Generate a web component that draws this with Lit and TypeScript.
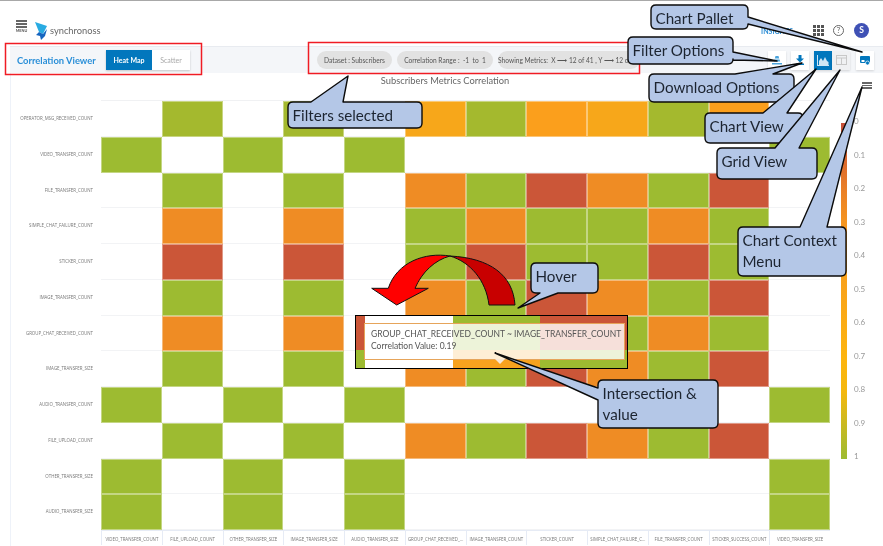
import { LitElement, css, html, svg } from "lit";
import { customElement } from "lit/decorators.js";

const COLORS: Record<string, string> = {
  g: "#a4b92e",
  a: "#f7a71a",
  b: "#fb9f1c",
  G: "#9dbb31",
  O: "#ef8c24",
  R: "#cb5638",
};

const ROWS = [
  ["OPERATOR_MSG_RECEIVED_COUNT", ".g.g.agbagb."],
  ["VIDEO_TRANSFER_COUNT", "G.G.G......G"],
  ["FILE_TRANSFER_COUNT", ".G.G.OGROGR."],
  ["SIMPLE_CHAT_FAILURE_COUNT", ".O.O.GOGGOG."],
  ["STICKER_COUNT", ".R.R.GRGGRG."],
  ["IMAGE_TRANSFER_COUNT", ".G.G.OGROGR."],
  ["GROUP_CHAT_RECEIVED_COUNT", ".O.O.GOGGOG."],
  ["IMAGE_TRANSFER_SIZE", ".G.G.OGROGR."],
  ["AUDIO_TRANSFER_COUNT", "G.G.G......G"],
  ["FILE_UPLOAD_COUNT", ".G.G.OGROGR."],
  ["OTHER_TRANSFER_SIZE", "G.G.G......G"],
  ["AUDIO_TRANSFER_SIZE", "G.G.G......G"],
];

const X_LABELS = [
  "VIDEO_TRANSFER_COUNT",
  "FILE_UPLOAD_COUNT",
  "OTHER_TRANSFER_SIZE",
  "IMAGE_TRANSFER_SIZE",
  "AUDIO_TRANSFER_SIZE",
  "GROUP_CHAT_RECEIVED_...",
  "IMAGE_TRANSFER_COUNT",
  "STICKER_COUNT",
  "SIMPLE_CHAT_FAILURE_C...",
  "FILE_TRANSFER_COUNT",
  "STICKER_SUCCESS_COUNT",
  "VIDEO_TRANSFER_SIZE",
];

const TICKS = ["0", "0.1", "0.2", "0.3", "0.4", "0.5", "0.6", "0.7", "0.8", "0.9", "1"];

// callout body + tail, the tail is given as base-point, tip, base-point going clockwise
const CALLOUTS = [
  { x: 651, y: 5, w: 97, h: 24, side: "right", a: 17, b: 24, tx: 862, ty: 52, lines: ["Chart Pallet"] },
  { x: 628, y: 37, w: 105, h: 27, side: "right", a: 52, b: 60, tx: 777, ty: 61, lines: ["Filter Options"] },
  { x: 649, y: 74, w: 145, h: 28, side: "top", a: 735, b: 773, tx: 802, ty: 63, lines: ["Download Options"] },
  { x: 705, y: 113, w: 98, h: 30, side: "top", a: 763, b: 787, tx: 816, ty: 69, lines: ["Chart View"] },
  { x: 717, y: 148, w: 100, h: 31, side: "top", a: 775, b: 799, tx: 840, ty: 70, lines: ["Grid View"] },
  { x: 738, y: 227, w: 108, h: 49, side: "top", a: 800, b: 827, tx: 862, ty: 87, lines: ["Chart Context", "Menu"] },
  { x: 288, y: 102, w: 134, h: 26, side: "top", a: 311, b: 343, tx: 348, ty: 76, lines: ["Filters selected"] },
  { x: 531, y: 263, w: 67, h: 30, side: "bottom", a: 540, b: 558, tx: 518, ty: 308, lines: ["Hover"] },
  { x: 598, y: 380, w: 120, h: 48, side: "left", a: 388, b: 400, tx: 495, ty: 353, lines: ["Intersection &", "value"] },
];

function calloutPath(c: (typeof CALLOUTS)[number]) {
  const r = 5;
  const right = c.x + c.w;
  const bottom = c.y + c.h;
  const top = c.side === "top" ? `L${c.a},${c.y} L${c.tx},${c.ty} L${c.b},${c.y} ` : "";
  const rgt = c.side === "right" ? `L${right},${c.a} L${c.tx},${c.ty} L${right},${c.b} ` : "";
  const bot = c.side === "bottom" ? `L${c.b},${bottom} L${c.tx},${c.ty} L${c.a},${bottom} ` : "";
  const lft = c.side === "left" ? `L${c.x},${c.b} L${c.tx},${c.ty} L${c.x},${c.a} ` : "";
  return (
    `M${c.x + r},${c.y} ${top}L${right - r},${c.y} Q${right},${c.y} ${right},${c.y + r} ${rgt}` +
    `L${right},${bottom - r} Q${right},${bottom} ${right - r},${bottom} ${bot}` +
    `L${c.x + r},${bottom} Q${c.x},${bottom} ${c.x},${bottom - r} ${lft}` +
    `L${c.x},${c.y + r} Q${c.x},${c.y} ${c.x + r},${c.y} Z`
  );
}

@customElement("app-root")
export class AppRoot extends LitElement {
  static styles = css`
    :host {
      display: block;
      width: 883px;
      height: 546px;
      overflow: hidden;
      background: #fff;
      font-family: "Lato", "Liberation Sans", sans-serif;
    }

    .page {
      position: relative;
      width: 883px;
      height: 546px;
      box-sizing: border-box;
      border-top: 1px solid #a8a8a8;
      filter: blur(0.4px);
    }

    /* header */
    .header {
      display: flex;
      align-items: center;
      height: 45px;
      padding: 0 14px 0 15px;
      box-sizing: border-box;
    }

    .menu {
      display: flex;
      flex-direction: column;
      align-items: center;
      width: 13px;
      margin-top: 6px;
    }

    .menu i {
      display: block;
      width: 11px;
      height: 1.5px;
      margin-bottom: 1.5px;
      background: #666;
    }

    .menu span {
      font-size: 3.8px;
      font-weight: 700;
      line-height: 4px;
      color: #555;
    }

    .logo {
      display: flex;
      align-items: center;
      gap: 2px;
      margin: 14px 0 0 7px;
      font-size: 9.3px;
      color: #666;
    }

    .nav {
      display: flex;
      align-items: center;
      margin: 14px 0 0 auto;
    }

    .nav b {
      margin-right: 20px;
      font-size: 7px;
      color: #2f8fd6;
    }

    .apps {
      display: grid;
      grid-template-columns: repeat(3, 3px);
      gap: 1px;
      margin-right: 9px;
    }

    .apps i {
      width: 3px;
      height: 3px;
      background: #555;
    }

    .help {
      width: 9px;
      height: 9px;
      margin-right: 10px;
      border: 1px solid #666;
      border-radius: 50%;
      font-size: 7.5px;
      line-height: 9px;
      text-align: center;
      color: #555;
    }

    .avatar {
      width: 15px;
      height: 15px;
      border-radius: 50%;
      background: #3f51b5;
      font-size: 8.5px;
      font-weight: 700;
      line-height: 15px;
      text-align: center;
      color: #fff;
    }

    /* toolbar */
    .toolbar {
      display: flex;
      align-items: center;
      height: 27px;
      margin-left: 10px;
      padding-left: 7px;
      background: #f4f6f9;
      border-top: 1px solid #e8ebf0;
      box-sizing: border-box;
    }

    .viewer {
      width: 89px;
      font-size: 9.4px;
      font-weight: 700;
      white-space: nowrap;
      color: #2a8fd8;
    }

    .seg {
      display: flex;
      height: 20px;
      box-shadow: 0 1px 2px #0003;
    }

    .seg span {
      display: flex;
      align-items: center;
      justify-content: center;
      font-size: 7px;
    }

    .seg .on {
      width: 46px;
      background: #0277bd;
      font-weight: 700;
      color: #fff;
    }

    .seg .off {
      width: 38px;
      background: #fff;
      color: #aaa;
    }

    .chips {
      display: flex;
      gap: 5px;
      margin-left: 127px;
    }

    .chip {
      display: flex;
      align-items: center;
      justify-content: center;
      height: 18px;
      border-radius: 9px;
      background: #e2e2e2;
      font-size: 6.6px;
      white-space: nowrap;
      color: #555;
    }

    .actions {
      display: flex;
      align-items: center;
      margin-left: auto;
      padding-right: 9px;
    }

    .btn {
      display: flex;
      align-items: center;
      justify-content: center;
      width: 18px;
      height: 19px;
      background: #fff;
      box-shadow: 0 1px 2px #0002;
    }

    .btn.active {
      background: #0277bd;
    }

    .btn.muted {
      background: #f0f1f3;
    }

    /* chart */
    .content {
      margin-left: 10px;
      border-left: 1px solid #eef2f9;
      height: 473px;
    }

    .title {
      position: relative;
      height: 28px;
      padding-top: 1px;
      box-sizing: border-box;
      font-size: 9.3px;
      line-height: 13px;
      text-align: center;
      color: #666;
      width: 868px;
    }

    .chart-menu {
      position: absolute;
      right: 7px;
      top: 9px;
      width: 10px;
    }

    .chart-menu i {
      display: block;
      height: 1.5px;
      margin-bottom: 1px;
      background: #666;
    }

    .chart {
      display: flex;
      align-items: flex-start;
    }

    .ylabels {
      width: 82px;
      padding-right: 8px;
      font-family: "Open Sans", sans-serif;
    }

    .ylabels div {
      height: 35.75px;
      font-size: 4.4px;
      line-height: 35.75px;
      text-align: right;
      white-space: nowrap;
      color: #777;
    }

    .plot {
      width: 729px;
    }

    .heat {
      display: grid;
      grid-template-columns: repeat(12, 60.75px);
      grid-auto-rows: 35.75px;
      border-top: 1px solid #f0f1f3;
      margin-top: -1px;
    }

    .cell {
      box-sizing: border-box;
      border-bottom: 1px solid #f2f3f5;
    }

    .cell.filled {
      border: 1px solid #ffffff66;
    }

    .xlabels {
      display: grid;
      grid-template-columns: repeat(12, 60.75px);
      border-top: 1px solid #e6ebf5;
      font-family: "Open Sans", sans-serif;
    }

    .xlabels div {
      height: 14px;
      border-left: 1px solid #e6ebf5;
      font-size: 4.4px;
      line-height: 16px;
      text-align: center;
      white-space: nowrap;
      overflow: hidden;
      color: #777;
    }

    .legend {
      display: flex;
      gap: 7px;
      margin: 22px 0 0 11px;
    }

    .bar {
      width: 6px;
      height: 336px;
      background: linear-gradient(
        #c7503a 0%,
        #d9662f 10%,
        #ea8027 20%,
        #f5951f 30%,
        #f9a41a 50%,
        #fdb50f 70%,
        #f4b80e 80%,
        #c8b922 90%,
        #9dbb31 100%
      );
    }

    .ticks {
      display: flex;
      flex-direction: column;
      justify-content: space-between;
      height: 344px;
      margin-top: -6px;
      font-size: 8px;
      line-height: 9px;
      color: #999;
    }

    /* the pasted tooltip crop sits over the grid */
    .paste {
      position: absolute;
      left: 355px;
      top: 314px;
      width: 273px;
      height: 54px;
      display: grid;
      grid-template-columns: 9px 88px 87px 87px;
      grid-template-rows: 34px 18px;
      box-sizing: border-box;
      border: 1.5px solid #000;
      background: #fff;
    }

    .tip {
      position: absolute;
      left: 8px;
      top: 7px;
      width: 261px;
      height: 37px;
      padding: 5px 0 0 6px;
      box-sizing: border-box;
      border: 1px solid #e6a45a;
      background: #ffffffd0;
      font-size: 8.5px;
      line-height: 11.5px;
      white-space: nowrap;
      color: #555;
    }

    .tip::after {
      content: "";
      position: absolute;
      left: 130px;
      top: 35px;
      width: 0;
      height: 0;
      border-left: 5px solid transparent;
      border-right: 5px solid transparent;
      border-top: 5px solid #f6e8d8;
    }

    .overlay {
      position: absolute;
      left: 0;
      top: -1px;
      width: 883px;
      height: 546px;
      pointer-events: none;
    }

    .overlay text {
      font-family: "Lato", "Open Sans", sans-serif;
      font-size: 15.2px;
      fill: #1c2430;
    }
  `;

  renderCells(row: string) {
    return [...row].map((c) =>
      c === "."
        ? html`<div class="cell"></div>`
        : html`<div class="cell filled" style="background:${COLORS[c]}"></div>`
    );
  }

  renderOverlay() {
    return html`<svg class="overlay" viewBox="0 0 883 546">
      <rect x="5.5" y="43.5" width="196" height="31" fill="none" stroke="#f01c24" stroke-width="1.5" />
      <rect x="308.5" y="42.5" width="331" height="31" fill="none" stroke="#f01c24" stroke-width="1.5" />
      ${CALLOUTS.map(
        (c) => svg`
          <path d=${calloutPath(c)} fill="#b4c7e7" stroke="#0b0b0b" stroke-width="1.4" stroke-linejoin="round" />
          ${c.lines.map(
            (l, i) => svg`<text x=${c.x + 4.5} y=${c.y + 18.5 + i * 21}>${l}</text>`
          )}
        `
      )}
      <path
        d="M450,256 C425,252 397,262 388.3,288.3 L371.7,288.3 L396.7,305 L428.3,288.3 L415,288.3 C422,272 435,260 450,256 Z"
        fill="#ff0000"
        stroke="#111"
        stroke-width="1"
      />
      <path
        d="M450,256 C490,258 513,275 515,305 L489,305 C486,280 470,262 450,256 Z"
        fill="#c80000"
        stroke="#111"
        stroke-width="1"
      />
    </svg>`;
  }

  render() {
    return html`
      <div class="page">
        <div class="header">
          <div class="menu"><i></i><i></i><i></i><span>MENU</span></div>
          <div class="logo">
            <svg width="13" height="18" viewBox="0 0 13 18">
              <path d="M0,0 L12,4 L8,12 L4,10 Z" fill="#29abe2" />
              <path d="M4,10 L8,12 L12,7 L10,14 L6,18 L5,14 L1,13 Z" fill="#1565c0" />
            </svg>
            <span>synchronoss</span>
          </div>
          <div class="nav">
            <b>INSIGHTS</b>
            <div class="apps">${[...Array(9)].map(() => html`<i></i>`)}</div>
            <div class="help">?</div>
            <div class="avatar">S</div>
          </div>
        </div>

        <div class="toolbar">
          <div class="viewer">Correlation Viewer</div>
          <div class="seg">
            <span class="on">Heat Map</span>
            <span class="off">Scatter</span>
          </div>
          <div class="chips">
            <div class="chip" style="width:75px">Dataset : Subscribers</div>
            <div class="chip" style="width:96px">Correlation Range : &nbsp;-1 &nbsp;to &nbsp;1</div>
            <div class="chip" style="width:142px">Showing Metrics: &nbsp;X ⟶ 12 of 41 , Y ⟶ 12 of 41</div>
          </div>
          <div class="actions">
            <div class="btn" style="margin-right:5px">
              <svg width="10" height="9" viewBox="0 0 10 9" fill="#4aa3dc">
                <path d="M3.5,0 H6.5 L7.2,2.5 H2.8 Z M2.4,3.5 H7.6 L8.2,5.5 H1.8 Z M0,7 H10 V8.5 H0 Z" />
              </svg>
            </div>
            <div class="btn" style="margin-right:5px">
              <svg width="8" height="10" viewBox="0 0 8 10" fill="#0277bd">
                <path d="M2.5,0 H5.5 V3.5 H8 L4,7.5 L0,3.5 H2.5 Z M0,8.5 H8 V10 H0 Z" />
              </svg>
            </div>
            <div class="btn active">
              <svg width="12" height="11" viewBox="0 0 12 11" fill="#cfe6f5">
                <path d="M0,0 H1 V10 H12 V11 H0 Z M2,10 V6 L4,3 L6,6 L8,2 L10,6 L11.5,7 V10 Z" />
              </svg>
            </div>
            <div class="btn muted" style="margin-right:6px">
              <svg width="11" height="10" viewBox="0 0 11 10" fill="none" stroke="#c8c8c8">
                <rect x="0.5" y="0.5" width="10" height="9" />
                <path d="M0.5,3 H10.5 M5.5,3 V9.5" />
              </svg>
            </div>
            <div class="btn">
              <svg width="10" height="9" viewBox="0 0 10 9">
                <rect width="10" height="7" rx="1" fill="#0277bd" />
                <rect x="1.5" y="4" width="3" height="2" fill="#fff" />
                <circle cx="7.5" cy="7" r="2" fill="#0277bd" stroke="#fff" stroke-width="0.7" />
              </svg>
            </div>
          </div>
        </div>

        <div class="content">
          <div class="title">
            Subscribers Metrics Correlation
            <div class="chart-menu"><i></i><i></i><i></i></div>
          </div>
          <div class="chart">
            <div class="ylabels">${ROWS.map((r) => html`<div>${r[0]}</div>`)}</div>
            <div class="plot">
              <div class="heat">${ROWS.map((r) => this.renderCells(r[1]))}</div>
              <div class="xlabels">${X_LABELS.map((l) => html`<div>${l}</div>`)}</div>
            </div>
            <div class="legend">
              <div class="bar"></div>
              <div class="ticks">${TICKS.map((t) => html`<span>${t}</span>`)}</div>
            </div>
          </div>
        </div>

        <div class="paste">
          <div style="background:#cb5638"></div>
          <div></div>
          <div style="background:#9dbb31"></div>
          <div style="background:#cb5638"></div>
          <div style="background:#9dbb31"></div>
          <div></div>
          <div style="background:#f8a21e"></div>
          <div style="background:#9dbb31"></div>
          <div class="tip">
            GROUP_CHAT_RECEIVED_COUNT ~ IMAGE_TRANSFER_COUNT<br />Correlation Value: 0.19
          </div>
        </div>

        ${this.renderOverlay()}
      </div>
    `;
  }
}
